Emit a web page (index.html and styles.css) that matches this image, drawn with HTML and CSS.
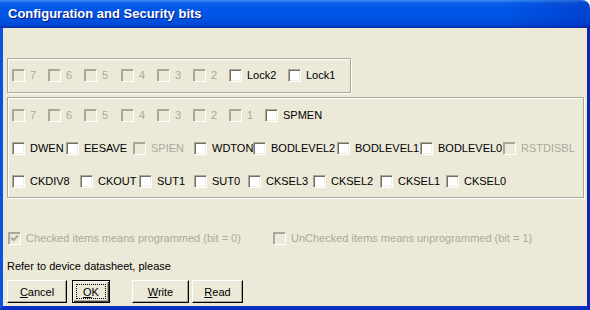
FILE: index.html
```html
<!DOCTYPE html>
<html>
<head>
    <title>Configuration and Security bits</title>
    <link rel="stylesheet" href="styles.css">
</head>
<body>
    <div class="window">
        <div class="titlebar">Configuration and Security bits</div>

        <div class="client">
            <!-- lock bits -->
            <div class="group group-lock">
                <div class="row row-lock">
                    <div class="item off"><span class="cb"></span><span class="lbl">7</span></div>
                    <div class="item off"><span class="cb"></span><span class="lbl">6</span></div>
                    <div class="item off"><span class="cb"></span><span class="lbl">5</span></div>
                    <div class="item off"><span class="cb"></span><span class="lbl">4</span></div>
                    <div class="item off"><span class="cb"></span><span class="lbl">3</span></div>
                    <div class="item off"><span class="cb"></span><span class="lbl">2</span></div>
                    <div class="item"><span class="cb"></span><span class="lbl">Lock2</span></div>
                    <div class="item"><span class="cb"></span><span class="lbl">Lock1</span></div>
                </div>
            </div>

            <!-- fuse bits -->
            <div class="group group-fuse">
                <div class="row row-ext">
                    <div class="item off"><span class="cb"></span><span class="lbl">7</span></div>
                    <div class="item off"><span class="cb"></span><span class="lbl">6</span></div>
                    <div class="item off"><span class="cb"></span><span class="lbl">5</span></div>
                    <div class="item off"><span class="cb"></span><span class="lbl">4</span></div>
                    <div class="item off"><span class="cb"></span><span class="lbl">3</span></div>
                    <div class="item off"><span class="cb"></span><span class="lbl">2</span></div>
                    <div class="item off"><span class="cb"></span><span class="lbl">1</span></div>
                    <div class="item"><span class="cb"></span><span class="lbl">SPMEN</span></div>
                </div>
                <div class="row row-high">
                    <div class="item"><span class="cb"></span><span class="lbl">DWEN</span></div>
                    <div class="item"><span class="cb"></span><span class="lbl">EESAVE</span></div>
                    <div class="item off"><span class="cb"></span><span class="lbl">SPIEN</span></div>
                    <div class="item"><span class="cb"></span><span class="lbl">WDTON</span></div>
                    <div class="item"><span class="cb"></span><span class="lbl">BODLEVEL2</span></div>
                    <div class="item"><span class="cb"></span><span class="lbl">BODLEVEL1</span></div>
                    <div class="item"><span class="cb"></span><span class="lbl">BODLEVEL0</span></div>
                    <div class="item off"><span class="cb"></span><span class="lbl">RSTDISBL</span></div>
                </div>
                <div class="row row-low">
                    <div class="item"><span class="cb"></span><span class="lbl">CKDIV8</span></div>
                    <div class="item"><span class="cb"></span><span class="lbl">CKOUT</span></div>
                    <div class="item"><span class="cb"></span><span class="lbl">SUT1</span></div>
                    <div class="item"><span class="cb"></span><span class="lbl">SUT0</span></div>
                    <div class="item"><span class="cb"></span><span class="lbl">CKSEL3</span></div>
                    <div class="item"><span class="cb"></span><span class="lbl">CKSEL2</span></div>
                    <div class="item"><span class="cb"></span><span class="lbl">CKSEL1</span></div>
                    <div class="item"><span class="cb"></span><span class="lbl">CKSEL0</span></div>
                </div>
            </div>

            <!-- legend -->
            <div class="row row-legend">
                <div class="item off">
                    <span class="cb">
                        <svg width="11" height="11" viewBox="0 0 11 11"><path d="M2 4.5 L4.5 7 L9 2.5" fill="none" stroke="#aca899" stroke-width="2"/></svg>
                    </span>
                    <span class="lbl">Checked items means programmed (bit = 0)</span>
                </div>
                <div class="item off"><span class="cb"></span><span class="lbl">UnChecked items means unprogrammed (bit = 1)</span></div>
            </div>

            <p class="note">Refer to device datasheet, please</p>

            <div class="buttons">
                <button class="btn btn-cancel"><u>C</u>ancel</button>
                <button class="btn btn-ok default"><span class="focus"><u>O</u>K</span></button>
                <button class="btn btn-write"><u>W</u>rite</button>
                <button class="btn btn-read"><u>R</u>ead</button>
            </div>
        </div>
    </div>
</body>
</html>
```

FILE: styles.css
```css
body {
    margin: 0;
    font-family: "Liberation Sans", Arial, sans-serif;
    font-size: 11px;
    color: #000;
    background: #fff;
}
.window {
    width: 590px;
    height: 310px;
    display: flex;
    flex-direction: column;
}
.titlebar {
    height: 28px;
    flex: none;
    box-sizing: border-box;
    padding: 6px 0 0 8px;
    border-top-right-radius: 8px;
    background:
        linear-gradient(to right, rgba(0, 40, 200, 0) 85%, rgba(0, 30, 170, 0.35) 100%),
        linear-gradient(to bottom, #3c8ef6 0, #0a5fe6 3px, #0056e8 9px, #0054e3 18px, #0049d6 25px, #0a35b0 27px, #0a2fa0 28px);
    color: #fff;
    font-weight: bold;
    font-size: 13px;
    line-height: 16px;
    text-shadow: 1px 1px 0 #0a1883;
}
.client {
    flex: 1;
    background: #ece9d8;
    border-left: 3px solid #0b52e0;
    border-right: 3px solid #0a26b0;
    border-bottom: 4px solid #0a30c2;
    padding: 30px 0 0 4px;
}
.group {
    box-sizing: border-box;
    border: 1px solid #aca899;
    box-shadow: inset 1px 1px 0 #fff, 1px 1px 0 #fff;
    padding-left: 4px;
}
.group-lock {
    width: 344px;
    height: 35px;
    padding-top: 10px;
}
.group-fuse {
    width: 577px;
    height: 101px;
    margin-top: 4px;
    padding-top: 11px;
    display: flex;
    flex-direction: column;
    gap: 20px;
}
.row {
    display: grid;
    height: 13px;
}
.row-lock { grid-template-columns: 36px 36px 37px 36px 36px 36px 59px auto; }
.row-ext { grid-template-columns: 36px 36px 37px 36px 36px 36px 36px auto; }
.row-high { grid-template-columns: 54px 67px 61px 59px 84px 83px 83px auto; }
.row-low { grid-template-columns: 68px 59px 55px 54px 65px 67px 66px auto; }
.row-legend {
    grid-template-columns: 265px auto;
    margin-top: 34px;
    padding-left: 1px;
}
.item {
    display: flex;
    align-items: center;
    overflow: hidden;
    white-space: nowrap;
}
.cb {
    flex: none;
    width: 13px;
    height: 13px;
    box-sizing: border-box;
    border: 1px solid;
    border-color: #aca899 #fff #fff #aca899;
    box-shadow: inset 1px 1px 0 #716f64, inset -1px -1px 0 #f1efe2;
    background: #fff;
    display: flex;
    align-items: center;
    justify-content: center;
}
.cb svg {
    display: block;
}
.lbl {
    padding-left: 5px;
    line-height: 13px;
    overflow: hidden;
}
.off .cb {
    background: #ece9d8;
    box-shadow: inset 1px 1px 0 #aca899, inset -1px -1px 0 #ece9d8;
}
.off .lbl {
    color: #aca899;
}
.note {
    margin: 15px 0 0 0;
    line-height: 13px;
}
.buttons {
    display: flex;
    margin-top: 7px;
}
.btn {
    height: 23px;
    box-sizing: border-box;
    padding: 0;
    font-family: inherit;
    font-size: 11px;
    color: #000;
    background: #ece9d8;
    border: 1px solid;
    border-color: #fff #000 #000 #fff;
    box-shadow: inset -1px -1px 0 #aca899;
}
.btn-cancel { width: 60px; }
.btn-ok { width: 38px; margin-left: 5px; }
.btn-write { width: 57px; margin-left: 22px; }
.btn-read { width: 51px; margin-left: 3px; }
.default {
    border-color: #000;
    box-shadow: inset 1px 1px 0 #fff, inset -1px -1px 0 #404040, inset -2px -2px 0 #aca899;
    display: flex;
    align-items: stretch;
    justify-content: stretch;
    padding: 3px;
}
.focus {
    flex: 1;
    border: 1px dotted #000;
    display: flex;
    align-items: center;
    justify-content: center;
}
```
